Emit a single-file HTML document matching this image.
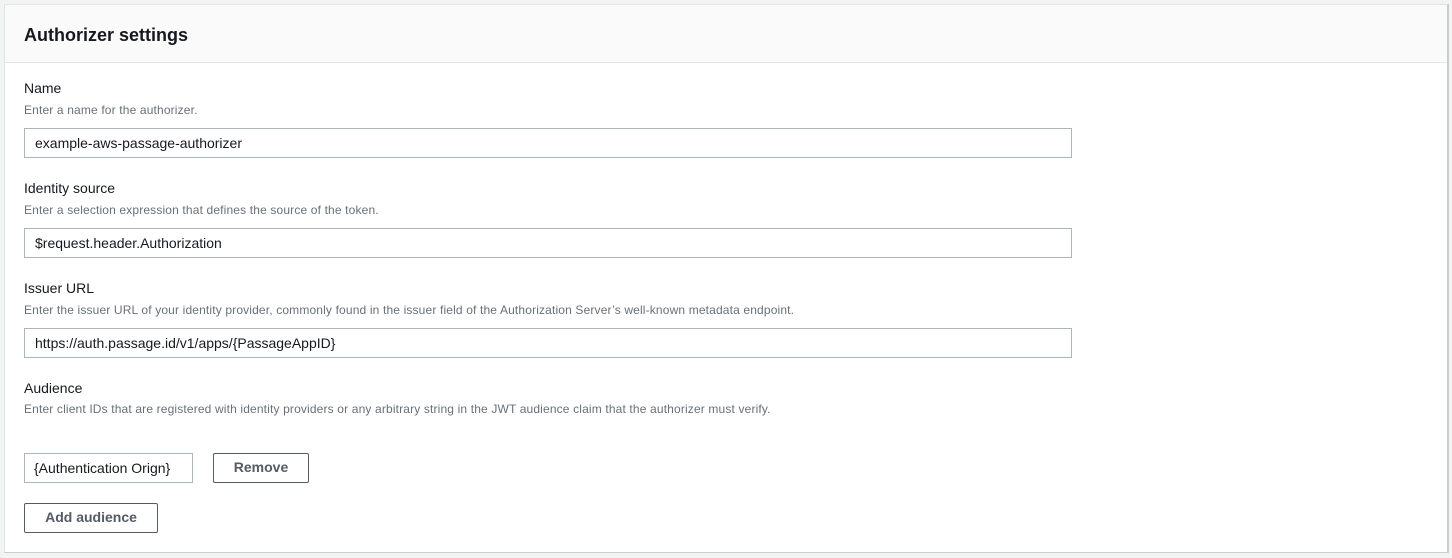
<!DOCTYPE html>
<html><head><style>
body{margin:0;background:#f2f3f3;font-family:"Liberation Sans",sans-serif;width:1452px;height:558px;overflow:hidden}
.panel{position:absolute;left:4px;top:4px;width:1442px;height:547px;background:#fff;border:1px solid #e3e3e3;border-right:2px solid #c9cbcc;border-bottom:1px solid #c9cbcc}
.hdr{height:57px;background:#fafafa;border-bottom:1px solid #e6e6e6}
.hdr h2{margin:0;position:absolute;left:19px;top:20px;font-size:18px;font-weight:bold;color:#16191f}
.abs{position:absolute}
.lbl{font-size:14px;color:#16191f}
.desc{font-size:12px;letter-spacing:0.15px;color:#687078;white-space:nowrap}
.inp{border:1px solid #aab7b8;box-sizing:border-box;height:30px;font-size:14px;color:#16191f;padding:6px 10px;line-height:16px}
.btn{border:1px solid #545b64;border-radius:2px;box-sizing:border-box;font-size:14px;font-weight:bold;color:#545b64;text-align:center;line-height:26px}
</style></head><body>
<div class="panel"><div class="hdr"><h2>Authorizer settings</h2></div></div>
<div class="abs lbl" style="left:24px;top:80px">Name</div>
<div class="abs desc" style="left:24px;top:103px">Enter a name for the authorizer.</div>
<div class="abs inp" style="left:24px;top:128px;width:1048px">example-aws-passage-authorizer</div>
<div class="abs lbl" style="left:24px;top:180px">Identity source</div>
<div class="abs desc" style="left:24px;top:203px">Enter a selection expression that defines the source of the token.</div>
<div class="abs inp" style="left:24px;top:228px;width:1048px">$request.header.Authorization</div>
<div class="abs lbl" style="left:24px;top:280px">Issuer URL</div>
<div class="abs desc" style="left:24px;top:303px">Enter the issuer URL of your identity provider, commonly found in the issuer field of the Authorization Server’s well-known metadata endpoint.</div>
<div class="abs inp" style="left:24px;top:328px;width:1048px">https://auth.passage.id/v1/apps/{PassageAppID}</div>
<div class="abs lbl" style="left:24px;top:380px">Audience</div>
<div class="abs desc" style="left:24px;top:402px">Enter client IDs that are registered with identity providers or any arbitrary string in the JWT audience claim that the authorizer must verify.</div>
<div class="abs inp" style="left:24px;top:453px;width:169px;padding:6px 9px">{Authentication Orign}</div>
<div class="abs btn" style="left:213px;top:453px;width:96px;height:30px">Remove</div>
<div class="abs btn" style="left:24px;top:503px;width:134px;height:30px">Add audience</div>
</body></html>
